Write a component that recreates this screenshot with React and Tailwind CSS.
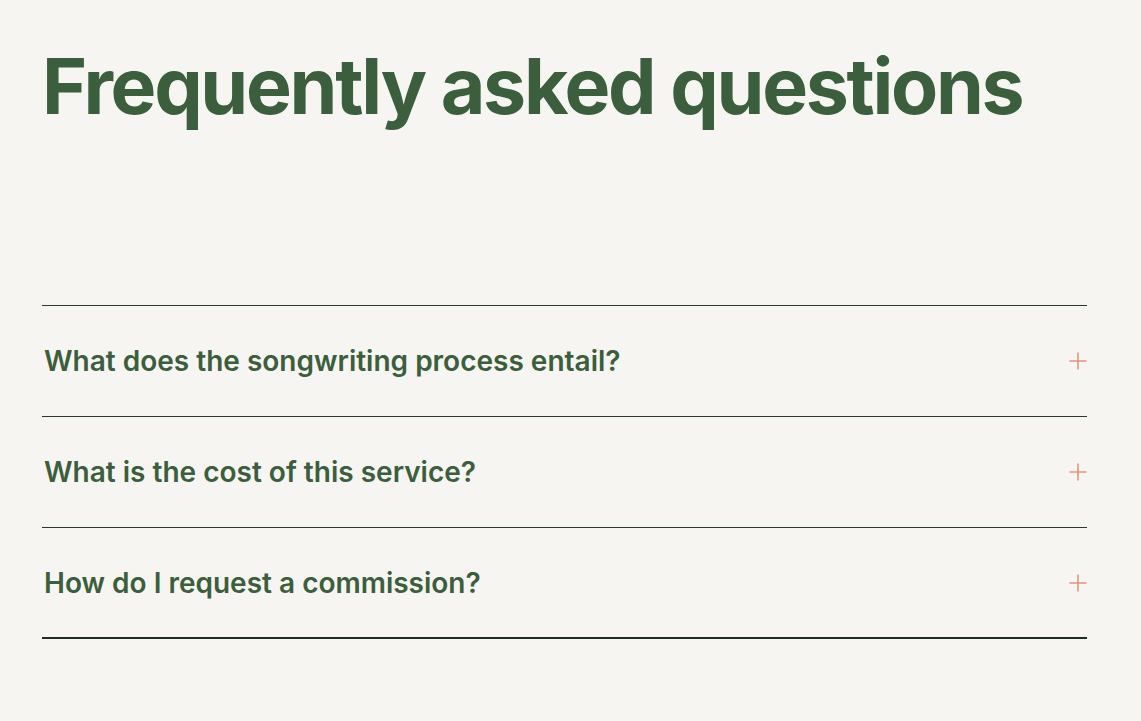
const faqs = [
  "What does the songwriting process entail?",
  "What is the cost of this service?",
  "How do I request a commission?",
];

const Plus = () => (
  <svg width="18" height="18" viewBox="0 0 18 18" className="shrink-0">
    <path d="M9 0.5v17M0.5 9h17" stroke="#e8907a" strokeWidth="1.5" fill="none" />
  </svg>
);

export default function App() {
  return (
    <div
      className="min-h-[721px] bg-[#f7f5f2] pl-[42px] pr-[54px] pt-[38px]"
      style={{ fontFamily: "Inter, 'Noto Sans', sans-serif" }}
    >
      <h1 className="text-[77px] font-bold leading-[96px] tracking-[-2.3px] text-[#3b5e3c]">
        Frequently asked questions
      </h1>

      <div className="mt-[171px] border-t border-[#2a3a2a]">
        {faqs.map((q, i) => (
          <div
            key={q}
            className={`flex h-[111px] items-center justify-between pl-[2px] ${
              i === faqs.length - 1
                ? "border-b-2 border-[#1f2e1f]"
                : "border-b border-[#2a3a2a]"
            }`}
          >
            <span className="text-[28px] font-semibold tracking-[0px] text-[#3b5e3c]">
              {q}
            </span>
            <Plus />
          </div>
        ))}
      </div>
    </div>
  );
}
